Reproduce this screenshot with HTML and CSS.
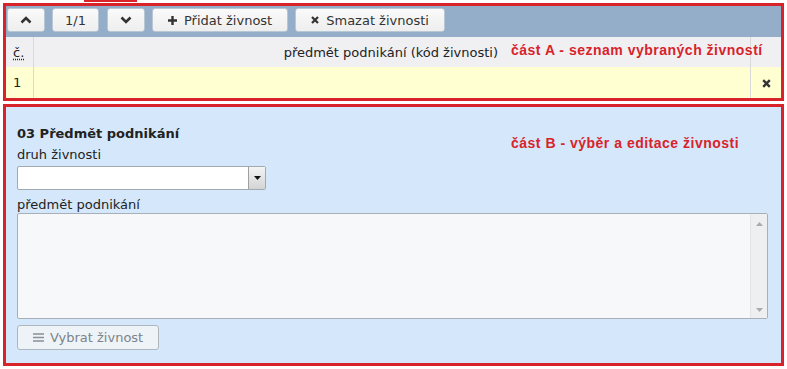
FILE: index.html
```html
<!DOCTYPE html>
<html lang="cs">
<head>
    <meta charset="UTF-8">
    <title>Předmět podnikání</title>
    <link rel="stylesheet" href="styles.css">
</head>
<body>

<div class="tabline"></div>

<section class="box box-a">
    <div class="toolbar">
        <button class="tb-btn tb-icon">
            <svg width="12" height="8" viewBox="0 0 12 8"><path d="M1.5 6.5 L6 2 L10.5 6.5" fill="none" stroke="#333" stroke-width="2.6"/></svg>
        </button>
        <button class="tb-btn tb-page">1/1</button>
        <button class="tb-btn tb-icon">
            <svg width="12" height="8" viewBox="0 0 12 8"><path d="M1.5 1.5 L6 6 L10.5 1.5" fill="none" stroke="#333" stroke-width="2.6"/></svg>
        </button>
        <button class="tb-btn">
            <svg width="9" height="9" viewBox="0 0 9 9"><path d="M4.5 0 V9 M0 4.5 H9" stroke="#333" stroke-width="2.4"/></svg>
            Přidat živnost
        </button>
        <button class="tb-btn">
            <svg width="8" height="8" viewBox="0 0 8 8"><path d="M1 1 L7 7 M7 1 L1 7" stroke="#333" stroke-width="2.2"/></svg>
            Smazat živnosti
        </button>
    </div>

    <table class="grid">
        <tr class="grid-head">
            <th class="col-num"><abbr>č.</abbr></th>
            <th class="col-name">předmět podnikání (kód živnosti)</th>
            <th class="col-del"></th>
        </tr>
        <tr class="grid-row">
            <td class="col-num">1</td>
            <td class="col-name"></td>
            <td class="col-del">
                <svg width="9" height="9" viewBox="0 0 9 9"><path d="M1.2 1.2 L7.8 7.8 M7.8 1.2 L1.2 7.8" stroke="#333" stroke-width="2.4"/></svg>
            </td>
        </tr>
    </table>

    <span class="note note-a">část A - seznam vybraných živností</span>
</section>

<section class="box box-b">
    <h3 class="form-title">03 Předmět podnikání</h3>

    <label class="field-label first">druh živnosti</label>
    <div class="select">
        <span class="select-btn">
            <svg width="7" height="4" viewBox="0 0 7 4"><path d="M0 0 H7 L3.5 4 Z" fill="#111"/></svg>
        </span>
    </div>

    <label class="field-label">předmět podnikání</label>
    <div class="textarea">
        <div class="scrollbar">
            <svg width="7" height="4" viewBox="0 0 7 4"><path d="M0 4 H7 L3.5 0 Z" fill="#a8acb0"/></svg>
            <svg width="7" height="4" viewBox="0 0 7 4"><path d="M0 0 H7 L3.5 4 Z" fill="#a8acb0"/></svg>
        </div>
    </div>

    <button class="pick-btn">
        <svg width="11" height="9" viewBox="0 0 11 9"><path d="M0 1 H11 M0 4.5 H11 M0 8 H11" stroke="#8a9098" stroke-width="1.6"/></svg>
        Vybrat živnost
    </button>

    <span class="note note-b">část B - výběr a editace živnosti</span>
</section>

</body>
</html>
```

FILE: styles.css
```css
body {
    margin: 0;
    font-family: 'DejaVu Sans', Verdana, sans-serif;
    font-size: 13px;
    color: #222;
    background: #fff;
}

.tabline {
    width: 53px;
    height: 2px;
    margin-left: 84px;
    margin-bottom: 1px;
    background: #d8232a;
}

.box {
    position: relative;
    margin: 0 3px;
    border: 3px solid #d8232a;
}

.box-a {
    background: #fff;
}

.box-b {
    margin-top: 3px;
    background: #d5e8fb;
    padding: 19px 13px 14px 11px;
    height: 223px;
}

/* toolbar */
.toolbar {
    display: flex;
    gap: 7px;
    height: 24px;
    padding: 2px 1px 5px 1px;
    background: #94adc9;
}

.tb-btn {
    display: flex;
    align-items: center;
    justify-content: center;
    gap: 7px;
    height: 24px;
    padding: 0 15px;
    border: 1px solid #b9c6d4;
    border-radius: 3px;
    background: linear-gradient(#fafafa, #eeeeee);
    font-family: inherit;
    font-size: 13px;
    color: #333;
}

.tb-icon {
    width: 38px;
    padding: 0;
}

.tb-page {
    width: 47px;
    padding: 0;
    margin-right: 1px;
}

/* grid */
.grid {
    width: 100%;
    border-collapse: collapse;
}

.grid th {
    font-weight: normal;
    height: 30px;
    padding: 0;
    background: #f0f0f3;
}

.grid td {
    height: 31px;
    padding: 0;
    background: #ffffd2;
}

.col-num {
    width: 20px;
    text-align: left;
    padding-left: 7px !important;
    border-right: 1px solid #d9d9d9;
}

.col-name {
    text-align: right;
    padding-right: 252px !important;
}

.col-del {
    width: 30px;
    border-left: 1px solid #d9d9d9;
    text-align: center;
}

.col-del svg {
    display: block;
    margin: 1px auto 0 auto;
}

abbr {
    text-decoration: underline dotted;
    text-underline-offset: 2px;
}

/* annotations */
.note {
    position: absolute;
    font-family: 'Liberation Sans', Arial, sans-serif;
    font-weight: bold;
    font-size: 14px;
    letter-spacing: 0.5px;
    color: #d8232a;
}

.note-a {
    left: 505px;
    top: 36px;
}

.note-b {
    left: 505px;
    top: 28px;
}

/* form */
.form-title {
    margin: 0;
    font-size: 13px;
    line-height: 16px;
    font-weight: bold;
}

.field-label {
    display: block;
    margin-top: 7px;
    line-height: 16px;
}

.field-label.first {
    margin-top: 5px;
}

.select {
    position: relative;
    width: 247px;
    height: 22px;
    margin-top: 3px;
    border: 1px solid #a3a9b0;
    border-radius: 2px;
    background: #fff;
    display: flex;
    justify-content: flex-end;
}

.select-btn {
    width: 16px;
    display: flex;
    align-items: center;
    justify-content: center;
    border-left: 1px solid #a0a0a0;
    background: linear-gradient(#f4f4f4, #d4d4d4);
}

.textarea {
    display: flex;
    justify-content: flex-end;
    height: 104px;
    margin-top: 0;
    border: 1px solid #a9afb6;
    border-radius: 2px;
    background: #f7f8fa;
}

.scrollbar {
    width: 16px;
    display: flex;
    flex-direction: column;
    justify-content: space-between;
    align-items: center;
    padding: 8px 0 6px 0;
    background: #eeeff1;
    border-left: 1px solid #e2e4e6;
}

.pick-btn {
    display: flex;
    align-items: center;
    gap: 6px;
    height: 25px;
    margin-top: 6px;
    padding: 0 15px;
    border: 1px solid #aeb6be;
    border-radius: 3px;
    background: #eef3f8;
    font-family: inherit;
    font-size: 13px;
    color: #7d838a;
}
```
